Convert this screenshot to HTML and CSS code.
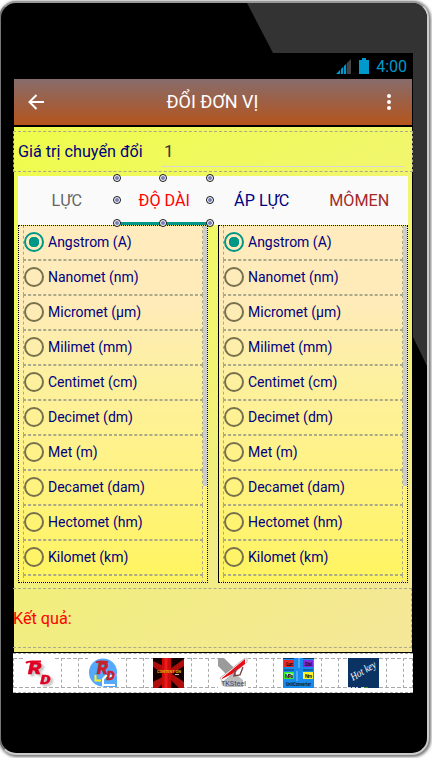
FILE: index.html
```
<!DOCTYPE html>
<html lang="vi">
<head>
  <meta charset="UTF-8">
  <meta name="viewport" content="width=device-width, initial-scale=1.0">
  <title>Đổi đơn vị</title>
  <link rel="stylesheet" href="styles.css">
</head>
<body>
  <div class="phone">
    <div class="screen">
      <div class="status-bar">
        <svg class="signal" width="15" height="15" viewBox="0 0 15 15">
          <path d="M0 15L11 4V15Z" fill="#0099cc"/>
          <path d="M11 4L15 0V15H11Z" fill="#444"/>
          <path d="M4.5 9V15M7.5 6V15M10.5 4V15" stroke="#000" stroke-width=".8"/>
        </svg>
        <svg class="battery" width="10" height="16" viewBox="0 0 10 16">
          <path d="M0 2H3V0H7V2H10V16H0Z" fill="#0099cc"/>
        </svg>
        <span class="clock">4:00</span>
      </div>

      <header class="app-bar">
        <svg width="16" height="16" viewBox="0 0 16 16">
          <path d="M16 8H2M8.5 1L1.5 8L8.5 15" fill="none" stroke="#fff" stroke-width="2"/>
        </svg>
        <h1>ĐỔI ĐƠN VỊ</h1>
        <svg width="4" height="16" viewBox="0 0 4 16">
          <g fill="#fff"><circle cx="2" cy="2" r="2"/><circle cx="2" cy="8" r="2"/><circle cx="2" cy="14" r="2"/></g>
        </svg>
      </header>

      <main class="content">
        <div class="value-row">
          <label for="amount">Giá trị chuyển đổi</label>
          <input id="amount" type="text" value="1">
        </div>

        <div class="tabs">
          <div class="tab force">LỰC</div>
          <div class="tab length">ĐỘ DÀI
            <svg class="handles" width="101" height="54" viewBox="0 0 101 54"></svg>
          </div>
          <div class="tab pressure">ÁP LỰC</div>
          <div class="tab moment">MÔMEN</div>
        </div>

        <div class="lists">
          <div class="unit-box"><div class="units"></div><div class="scrollbar"></div></div>
          <div class="unit-box"><div class="units"></div><div class="scrollbar"></div></div>
        </div>

        <div class="result">Kết quả:</div>
      </main>

      <nav class="bottom-nav">
        <div class="nav-cell">
          <svg width="31" height="29" viewBox="0 0 31 29">
            <rect width="31" height="29" fill="#fff"/>
            <text class="logo shadow" transform="translate(5 16) scale(1.25 1)" font-size="17">R<tspan dx="-1" dy="9.5" font-size="13">D</tspan></text>
            <path d="M3 5Q5 2.8 12 3.6H18" fill="none" stroke="#e00024" stroke-width="2"/>
          </svg>
        </div>
        <div class="nav-cell">
          <svg width="30" height="29" viewBox="0 0 30 29">
            <rect width="30" height="29" fill="#fff"/>
            <circle cx="15" cy="14.5" r="14" fill="#55a9fb"/>
            <path d="M16 18H29V29H16Z" fill="#55a9fb"/>
            <path d="M27 18H18L15 21V27H27" fill="none" stroke="#fff" stroke-width="2"/>
            <path d="M7.5 17V22.5H13" fill="none" stroke="#ffef20" stroke-width="2"/>
            <text class="logo dark" transform="translate(9 16) scale(1.1 1)" font-size="16">R<tspan dx="-1.5" dy="6" font-size="12">D</tspan></text>
            <path d="M8 4.5Q10 3 20 4" fill="none" stroke="#c9202b" stroke-width="2"/>
          </svg>
        </div>
        <div class="nav-cell">
          <svg width="31" height="30" viewBox="0 0 31 30">
            <rect width="31" height="30" fill="#160000"/>
            <path d="M0 3V9L13 17L0 24V30H5L16 20L26 30H31V24L19 16L31 8V1L17 11Z" fill="#b00d0d"/>
            <path d="M9 0H18V30H9Z" fill="#c80d0d"/>
            <path d="M13 0V30" stroke="#ee1b1b" stroke-width="3"/>
            <text x="4" y="15" font-size="4" textLength="24" fill="#e0b000" font-weight="bold">CONTENT ON</text>
            <path d="M22 16.5H26" stroke="#f3a8a8"/>
          </svg>
        </div>
        <div class="nav-cell">
          <svg width="30" height="30" viewBox="0 0 30 30">
            <rect width="30" height="30" fill="#fff"/>
            <path d="M0 0H6L19 13L12 20L0 8Z" fill="#9b9b9b"/>
            <path d="M16 15L25 22V29H7L3 25Z" fill="#bbb"/>
            <path d="M2 20L27 0H29V4L5 24Z" fill="#fff" stroke="#888" stroke-width=".6"/>
            <path d="M4 20L27 1V6L14 16L4 21Z" fill="#e80f1b"/>
            <path d="M18 11L16 18L22 17L25 9M17 12V17" fill="none" stroke="#754747" stroke-width="1.4"/>
            <text x="3" y="28" font-size="8" textLength="25" lengthAdjust="spacingAndGlyphs" fill="#34477d">TKSteel</text>
          </svg>
        </div>
        <div class="nav-cell">
          <svg width="31" height="30" viewBox="0 0 31 30">
            <rect width="31" height="30" fill="#168bec"/>
            <path d="M0 .5H11M20 .5H31M1 12H11M20 12H30" stroke="#083961"/>
            <rect x="1" y="2" width="10" height="7" fill="#ee2525"/>
            <rect x="20" y="2" width="10" height="7" fill="#8727e0"/>
            <rect x="1" y="14" width="10" height="7" fill="#36ec2c"/>
            <rect x="2.5" y="15.5" width="7" height="4" fill="#e9ffe6"/>
            <rect x="20" y="14" width="10" height="7" fill="#fff32d"/>
            <path d="M16 0V10M14 13V23" stroke="#8bc9ff"/>
            <g font-size="5" font-weight="bold" fill="#141414"><text x="3" y="7.5" textLength="7">Lực</text><text x="22" y="7.5" textLength="7">Dài</text><text x="2" y="19.5" textLength="8">MPa</text><text x="22" y="19.5" textLength="7">Nm</text><text x="3" y="27.5" textLength="25" lengthAdjust="spacingAndGlyphs">UnitConverter</text></g>
          </svg>
        </div>
        <div class="nav-cell">
          <svg width="31" height="30" viewBox="0 0 31 30">
            <rect width="31" height="30" fill="#0a3263"/>
            <text class="hotkey" x="5" y="23" font-size="11" textLength="28" lengthAdjust="spacingAndGlyphs" transform="rotate(-31 5 23)">Hot key</text>
            <path d="M0 29.5H10M13 29.5H16" stroke="#c5d1df" stroke-dasharray="3 1"/>
            <path d="M16 29.5H20" stroke="#4e8b35"/>
          </svg>
        </div>
        <div class="nav-cell last"></div>
      </nav>
    </div>
  </div>

  <script>
    const units = ['Angstrom (A)', 'Nanomet (nm)', 'Micromet (µm)', 'Milimet (mm)', 'Centimet (cm)',
      'Decimet (dm)', 'Met (m)', 'Decamet (dam)', 'Hectomet (hm)', 'Kilomet (km)'];

    document.querySelectorAll('.units').forEach(list => {
      units.forEach((name, i) => {
        list.innerHTML += `<div class="unit"><span class="radio ${i === 0 ? 'checked' : ''}"></span>${name}</div>`;
      });
      list.innerHTML += '<div class="unit"></div>';
    });

    // Selection handles around the active tab
    const handles = document.querySelector('.handles');
    [4, 50, 97].forEach(x => {
      [4, 26, 49].forEach(y => {
        if (x === 50 && y === 26) return;
        handles.innerHTML += `<circle cx="${x}" cy="${y}" r="3.5" fill="#fff" stroke="#111"/><circle cx="${x}" cy="${y}" r="2" fill="#777dbb"/>`;
      });
    });
  </script>
</body>
</html>
```

FILE: styles.css
```
* {
  box-sizing: border-box;
}

body {
  margin: 0;
  height: 758px;
  overflow: hidden;
  background: #fff;
  font-family: Roboto, sans-serif;
}

/* Phone frame */
.phone {
  width: 430px;
  height: 754px;
  margin: 1px 0 0 -1px;
  padding: 50px 0 0 12px;
  border: 2px solid #bbb;
  border-color: #999 #ccc #ccc #777;
  border-radius: 17px;
  box-shadow: 1px 1px 3px 1px #777;
  background: #000;
  position: relative;
  overflow: hidden;
}

/* Glare on the glass */
.phone::before {
  content: "";
  position: absolute;
  inset: 0;
  background: #333;
  clip-path: polygon(246px 0, 100% 0, 100% 363px, 411px 332px, 272px 50px);
}

.screen {
  position: relative;
  width: 400px;
  height: 640px;
  background: #000;
}

.status-bar {
  display: flex;
  justify-content: flex-end;
  align-items: center;
  height: 26px;
  padding-right: 6px;
  color: #0099cc;
  font-size: 16px;
}

.battery {
  margin: 0 7px 0 8px;
}

/* Header */
.app-bar {
  display: flex;
  align-items: center;
  height: 46px;
  margin: 0 1px;
  padding: 0 21px 0 14px;
  background: linear-gradient(#876c6c, #b5541c);
}

.app-bar h1 {
  flex: 1;
  margin: 0;
  padding-right: 6px;
  color: #fff;
  font-size: 18px;
  font-weight: normal;
  line-height: 44px;
  text-align: center;
}

.content {
  height: 525px;
  margin: 2px 1px 0;
  padding-top: 4px;
  background: linear-gradient(145deg, #eefc4a, #f1f76a 35%, #f1ed80 65%, #f5e79a);
}

.value-row {
  display: flex;
  height: 41px;
  margin: 0 -1px;
  padding: 0 8px 3px 4px;
  border: 1px dashed #aaa98a;
}

.value-row label {
  width: 144px;
  line-height: 40px;
  color: #000080;
  font-size: 16.2px;
}

.value-row input {
  flex: 1;
  min-width: 0;
  height: 35px;
  padding: 3px 2px 0;
  border: 0;
  border-bottom: 1px solid #d8d8d8;
  background: transparent;
  color: #333;
  font: 17px Roboto, sans-serif;
}

/* Tabs */
.tabs {
  display: flex;
  height: 49px;
  margin: 4px 4px 0;
  background: #fafafa;
}

.tab {
  position: relative;
  flex: 1;
  padding-top: 1px;
  line-height: 47px;
  text-align: center;
  font-size: 16.2px;
}

.force { color: #666; }
.length { color: #f00; border-bottom: 3px solid #009688; }
.pressure { color: #000080; }
.moment { color: #a52a2a; }

.handles {
  position: absolute;
  left: -3px;
  top: -2px;
}

/* Unit lists */
.lists {
  display: flex;
  gap: 10px;
  height: 358px;
  margin: 0 4px;
}

.unit-box {
  display: flex;
  justify-content: space-between;
  width: 190px;
  padding-left: 4px;
  border: 1px dotted #000;
  background: linear-gradient(#ffebbd, #feebb8 22%, #fdf0a0 42%, #fff287 66%, #fff45f);
  overflow: hidden;
}

.unit-box:last-child {
  border-left-style: solid;
}

.units {
  width: 180px;
}

.unit {
  display: flex;
  align-items: center;
  height: 35px;
  border: 1px dashed #aaa98a;
  color: #000080;
  font-size: 14px;
}

.unit:first-child {
  margin-top: -1px;
  border-top: 0;
  padding-bottom: 1px;
}

.unit:not(:first-child) {
  padding-bottom: 2px;
}

.radio {
  width: 20px;
  height: 20px;
  margin-right: 4px;
  border: 2px solid #77704d;
  border-radius: 50%;
}

.radio.checked {
  border-color: #009688;
  background: radial-gradient(#009688 5px, transparent 5.5px);
}

.scrollbar {
  width: 4px;
  height: 260px;
  background: #ccc;
}

.result {
  height: 60px;
  margin: 5px 0 0 -1px;
  border: 1px dashed #aaa98a;
  border-left-width: 0;
  line-height: 59px;
  color: #f00;
  font-size: 16.2px;
}

/* Bottom icons */
.bottom-nav {
  display: flex;
  gap: 16px;
  height: 40px;
  margin-top: 1px;
  padding: 4px 0;
  border: 1px dashed #aaa;
  border-width: 1px 0;
  background: repeating-linear-gradient(90deg, #aaa 0 4px, #fff 4px 6px) 0 4px / 100% 1px no-repeat,
    repeating-linear-gradient(90deg, #aaa 0 4px, #fff 4px 6px) 0 33px / 100% 1px no-repeat, #fff;
}

.nav-cell {
  flex: 0 0 49px;
  padding-left: 9px;
  border: 1px dashed #aaa;
  border-width: 0 1px;
}

.nav-cell svg {
  display: block;
}

.last {
  flex-basis: 10px;
  padding: 0;
}

.logo {
  fill: #e00024;
  stroke: #e00024;
  stroke-width: .4;
  font-style: italic;
  font-weight: 900;
}

.logo.shadow {
  filter: drop-shadow(2px 2px 1px #bbb);
}

.logo.dark {
  fill: #c9202b;
  stroke: #c9202b;
}

.hotkey {
  fill: #fff;
  font-family: "Liberation Serif", serif;
  font-style: italic;
}
```
